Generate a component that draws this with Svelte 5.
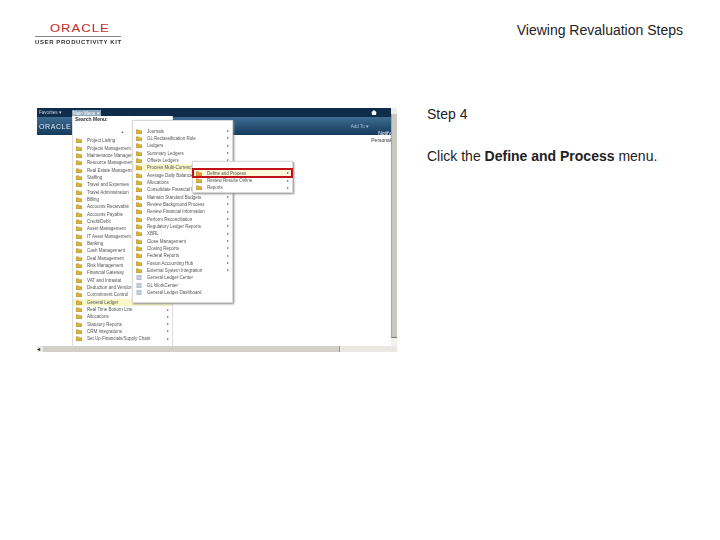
<script>
	const main = [
		['Project Listing', 0], ['Projects Management', 0], ['Maintenance Management', 0], ['Resource Management', 0],
		['Real Estate Management', 0], ['Staffing', 0], ['Travel and Expenses', 0], ['Travel Administration', 0],
		['Billing', 0], ['Accounts Receivable', 0], ['Accounts Payable', 0], ['Credit/Debit', 0],
		['Asset Management', 0], ['IT Asset Management', 0], ['Banking', 0], ['Cash Management', 0],
		['Deal Management', 0], ['Risk Management', 0], ['Financial Gateway', 0], ['VAT and Intrastat', 0],
		['Deduction and Vendor Tax', 0], ['Commitment Control', 0], ['General Ledger', 0, true], ['Real Time Bottom Line', 1],
		['Allocations', 1], ['Statutory Reports', 1], ['CRM Integrations', 1], ['Set Up Financials/Supply Chain', 1]
	];
	const sub = [
		['Journals', 1], ['GL Reclassification Rule', 1], ['Ledgers', 1], ['Summary Ledgers', 1], ['Offsets Ledgers', 1],
		['Process Multi-Currency', 1, true], ['Average Daily Balance', 1], ['Allocations', 1], ['Consolidate Financial Data', 1],
		['Maintain Standard Budgets', 1], ['Review Background Process', 1], ['Review Financial Information', 1],
		['Perform Reconciliation', 1], ['Regulatory Ledger Reports', 1], ['XBRL', 1], ['Close Management', 1],
		['Closing Reports', 1], ['Federal Reports', 1], ['Fusion Accounting Hub', 1], ['External System Integration', 1],
		['General Ledger Center', 0, false, true], ['GL WorkCenter', 0, false, true], ['General Ledger Dashboard', 0, false, true]
	];
	const fly = [
		['Define and Process', 1, false, false, true],
		['Review Results Online', 1],
		['Reports', 1]
	];
</script>

{#snippet row(item)}
	<div class="row" class:hot={item[2]} class:picked={item[4]}>
		{#if item[3]}
			<svg class="ico" viewBox="0 0 7 6"><rect x="1" y="0" width="5" height="6" fill="#c3cfe0" stroke="#8d9cb4" stroke-width=".6" /></svg>
		{:else}
			<svg class="ico" viewBox="0 0 7 6"><path d="M0 1h3l1 1h3v4H0z" fill={item[4] ? '#ee9a3a' : '#d9b13c'} stroke="#9c8430" stroke-width=".5" /></svg>
		{/if}
		<span class="label">{item[0]}</span>
		{#if item[1]}<span class="arrow"></span>{/if}
	</div>
{/snippet}

<div class="page">
	<header>
		<div class="logo">
			<div class="oracle">ORACLE</div>
			<div class="upk">USER PRODUCTIVITY KIT</div>
		</div>
		<h1>Viewing Revaluation Steps</h1>
	</header>

	<main>
		<div class="shot">
			<div class="app">
				<div class="topbar">
					<span class="fav">Favorites ▾</span>
					<span class="mainmenu">Main Menu ▾</span>
					<svg class="home" viewBox="0 0 8 7"><path d="M4 0 8 3.5H7V7H1V3.5H0z" fill="#fff" /></svg>
				</div>
				<div class="band">
					<span class="brand">ORACLE</span>
					<span class="addto">Add To ▾</span>
				</div>
				<div class="body">
					<span class="notify">Notify</span>
					<span class="personal">Personal</span>
				</div>

				<div class="menu first">
					<div class="search">Search Menu:</div>
					<div class="up">▲</div>
					{#each main as item}{@render row(item)}{/each}
				</div>
				<div class="menu second">
					{#each sub as item}{@render row(item)}{/each}
				</div>
				<div class="menu third">
					{#each fly as item}{@render row(item)}{/each}
				</div>
			</div>
			<div class="vbar">
				<span class="btn"></span>
				<span class="thumb"></span>
				<span class="track"></span>
			</div>
			<div class="hbar">
				<span class="left">◂</span>
				<span class="hthumb"></span>
			</div>
		</div>

		<section>
			<p>Step 4</p>
			<p>Click the <b>Define and Process</b> menu.</p>
		</section>
	</main>
</div>

<style>
	:global(body) {
		background: #fff;
	}

	.page {
		width: 720px;
		height: 540px;
		overflow: hidden;
		font-family: 'Liberation Sans', Arial, sans-serif;
		color: #222;
	}

	header {
		display: flex;
		justify-content: space-between;
		padding: 22px 37px 0 35px;
		height: 108px;
		box-sizing: border-box;
	}

	h1 {
		margin: 0;
		font-size: 14px;
		font-weight: 400;
		line-height: 16px;
	}

	.logo {
		width: 86px;
		height: 26px;
		filter: blur(0.25px);
	}

	.oracle {
		color: #c8352c;
		font-size: 11px;
		line-height: 13px;
		letter-spacing: 0.9px;
		-webkit-text-stroke: 0.1px #c8352c;
		transform: scaleX(1.18);
		text-align: center;
		padding-left: 3px;
	}

	.upk {
		margin-top: 1px;
		border-top: 1px solid #8a8a8a;
		padding-top: 2px;
		font-size: 6px;
		line-height: 7px;
		font-weight: 700;
		letter-spacing: 0.6px;
		white-space: nowrap;
		color: #333;
	}

	main {
		display: flex;
		padding-left: 37px;
	}

	.shot {
		position: relative;
		width: 360px;
		height: 244px;
		display: grid;
		grid-template-columns: 354px 6px;
		grid-template-rows: 238px 6px;
		flex: none;
	}

	.app {
		position: relative;
		overflow: hidden;
		background: #fff;
		font-size: 4.5px;
		filter: blur(0.35px);
	}

	.topbar {
		display: flex;
		align-items: center;
		height: 9px;
		background: #0f2d4a;
		color: #c8d4e0;
		font-size: 4.5px;
		padding-left: 2px;
	}

	.fav {
		width: 33px;
	}

	.mainmenu {
		background: #8fa9c0;
		color: #fff;
		width: 28px;
		height: 7px;
		line-height: 7px;
		padding-left: 1px;
		margin-top: 2px;
	}

	.home {
		width: 6px;
		height: 5px;
		margin-left: auto;
		margin-right: 14px;
	}

	.band {
		height: 18px;
		display: flex;
		align-items: center;
		justify-content: space-between;
		background: linear-gradient(#3d6c92, #143a5c);
		color: #dfe8f0;
		padding: 0 18px 0 2px;
	}

	.brand {
		font-size: 7px;
		letter-spacing: 0.6px;
	}

	.addto {
		font-size: 4.5px;
		color: #9fc0da;
		margin-right: 4px;
	}

	.body {
		display: flex;
		flex-direction: column;
		align-items: flex-end;
		color: #333;
		font-size: 5px;
		line-height: 7px;
		margin-top: -5px;
		position: relative;
	}

	.notify {
		color: #fff;
	}

	.menu {
		position: absolute;
		background: #fff;
		box-sizing: border-box;
		color: #555;
	}

	.first {
		left: 35px;
		top: 8px;
		width: 101px;
		height: 240px;
		border-right: 1px solid #ddd;
		border-left: 1px solid #ddd;
	}

	.search {
		font-weight: 700;
		font-size: 5px;
		line-height: 7px;
		padding-left: 2px;
		color: #333;
	}

	.up {
		font-size: 3.5px;
		line-height: 9px;
		text-align: center;
		margin-top: 5px;
		margin-bottom: 0.3px;
		color: #555;
	}

	.second {
		left: 95px;
		top: 12px;
		width: 101px;
		height: 183px;
		padding-top: 6.5px;
		border: 1px solid #d8d8d8;
		box-shadow: 1px 1px 2px #888;
	}

	.third {
		left: 155px;
		top: 53px;
		width: 101px;
		height: 32px;
		padding-top: 7px;
		border: 1px solid #d8d8d8;
		box-shadow: 1px 1px 2px #888;
	}

	.row {
		display: flex;
		align-items: center;
		height: 7.33px;
		padding: 0 3px 0 3px;
		white-space: nowrap;
	}

	.ico {
		width: 6px;
		height: 5px;
		flex: none;
		margin-right: 5px;
	}

	.label {
		flex: 1;
		overflow: hidden;
	}

	.arrow {
		flex: none;
		width: 0;
		height: 0;
		border-left: 2px solid #666;
		border-top: 1.5px solid transparent;
		border-bottom: 1.5px solid transparent;
	}

	.hot {
		background: #f7f7c8;
	}

	.picked {
		background: #fdf6d8;
		outline: 2.5px solid #c1121c;
		outline-offset: -1px;
		height: 8px;
	}

	.first .row {
		padding-left: 3px;
	}

	.first .ico {
		margin-right: 5px;
	}

	.vbar {
		grid-column: 2;
		grid-row: 1;
		display: flex;
		flex-direction: column;
		background: #e6e5df;
	}

	.btn {
		height: 6px;
		background: #ecebe6;
	}

	.thumb {
		height: 223px;
		background: #c9c7be;
		border-left: 1px solid #a9a79e;
		border-bottom: 1px solid #77756c;
	}

	.track {
		flex: 1;
		background: #f2f1ed;
	}

	.hbar {
		grid-column: 1 / 3;
		grid-row: 2;
		display: flex;
		align-items: center;
		background: #e9e8e2;
		font-size: 6px;
		line-height: 6px;
	}

	.left {
		width: 6px;
		color: #111;
	}

	.hthumb {
		width: 296px;
		height: 6px;
		background: #d2d0c7;
		border-right: 1px solid #99978e;
	}

	section {
		margin-left: 30px;
		margin-top: -2px;
		font-size: 14px;
		line-height: 16px;
	}

	section p {
		margin: 0 0 26px;
	}

	section b {
		font-weight: 700;
	}
</style>
